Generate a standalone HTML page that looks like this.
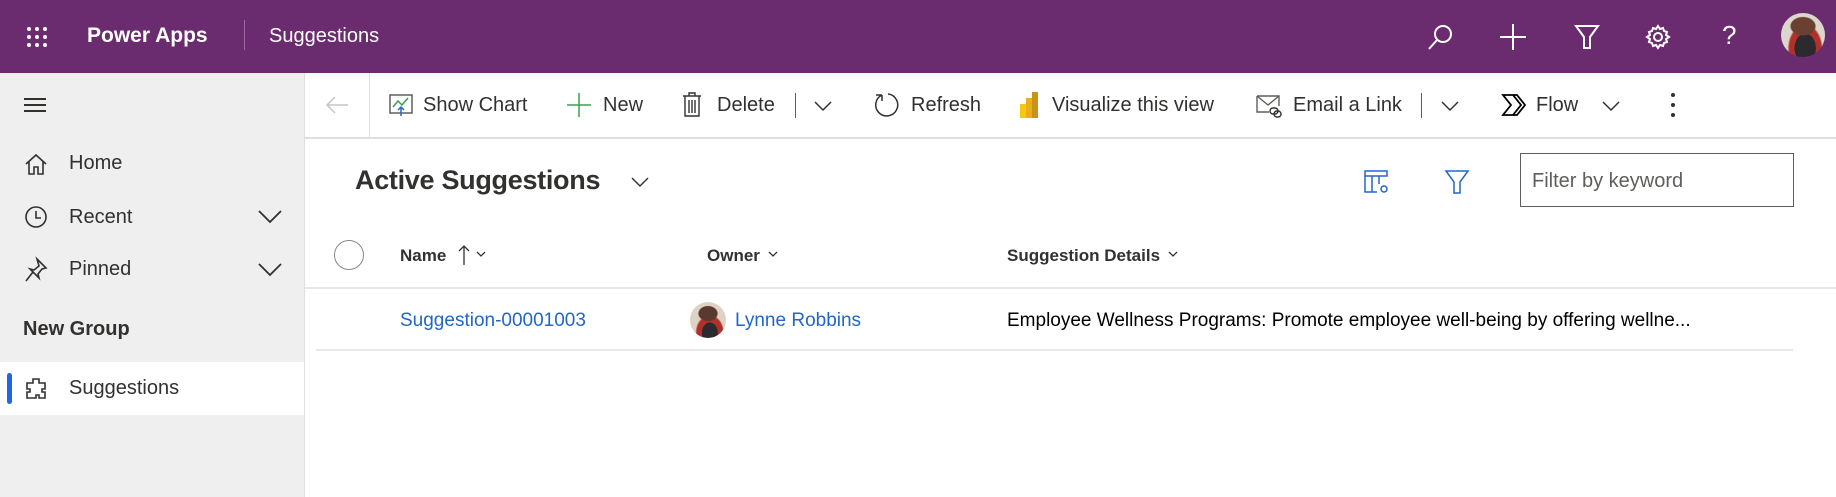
<!DOCTYPE html>
<html><head><meta charset="utf-8"><style>
*{margin:0;padding:0;box-sizing:border-box}
body{width:1836px;height:497px;overflow:hidden;background:#fff;font-family:"Liberation Sans",sans-serif;color:#323130;position:relative}
.a{position:absolute;white-space:nowrap}
.hdr{left:0;top:0;width:1836px;height:73px;background:#6b2c6f}
.side{left:0;top:73px;width:305px;height:424px;background:#efefef;border-right:1px solid #e1dfdd}
.tb{font-size:20px;top:93px;line-height:24px}
svg{position:absolute;overflow:visible}
</style></head><body>
<div class="a hdr"></div>
<svg style="left:27px;top:27px" width="20" height="20" fill="#fff"><circle cx="2" cy="2" r="2"/><circle cx="10" cy="2" r="2"/><circle cx="18" cy="2" r="2"/><circle cx="2" cy="10" r="2"/><circle cx="10" cy="10" r="2"/><circle cx="18" cy="10" r="2"/><circle cx="2" cy="18" r="2"/><circle cx="10" cy="18" r="2"/><circle cx="18" cy="18" r="2"/></svg>
<div class="a" style="left:87px;top:24px;font-size:21px;font-weight:bold;color:#fff">Power Apps</div>
<div class="a" style="left:244px;top:20px;width:1px;height:30px;background:#9d6aa0"></div>
<div class="a" style="left:269px;top:25px;font-size:20px;color:#fff">Suggestions</div>
<svg style="left:1428px;top:24px" width="26" height="26" fill="none" stroke="#fff" stroke-width="2"><circle cx="15" cy="10" r="8"/><path d="M9 16L1 25"/></svg>
<svg style="left:1500px;top:24px" width="26" height="26" stroke="#fff" stroke-width="2"><path d="M13 0v26M0 13h26"/></svg>
<svg style="left:1575px;top:24px" width="24" height="26" fill="none" stroke="#fff" stroke-width="2"><path d="M1 2h22l-8 11v11h-6V13z"/></svg>
<svg style="left:1646px;top:25px" width="24" height="24" fill="none" stroke="#fff" stroke-width="2"><circle cx="12" cy="12" r="4"/><path d="M12 1l2 3 3-1 1 3 3 1-1 3 3 2-3 2 1 3-3 1-1 3-3-1-2 3-2-3-3 1-1-3-3-1 1-3-3-2 3-2-1-3 3-1 1-3 3 1z"/></svg>
<div class="a" style="left:1722px;top:20px;font-size:26px;color:#fff">?</div>
<div class="a" style="left:1781px;top:13px;width:44px;height:44px;border-radius:50%;background:radial-gradient(ellipse 30% 22% at 50% 30%,#6a4033 0 90%,transparent 100%),radial-gradient(ellipse 40% 55% at 55% 80%,#2b2a2e 0 60%,#b0302c 61% 90%,transparent 100%),#ddd6cc"></div>

<div class="a side"></div>
<svg style="left:24px;top:97px" width="22" height="16" stroke="#323130" stroke-width="2"><path d="M0 2h22M0 8h22M0 14h22"/></svg>
<svg style="left:25px;top:153px" width="22" height="22" fill="none" stroke="#323130" stroke-width="1.6"><path d="M1 11L11 2l10 9M4 8v13h5v-7h4v7h5V8"/></svg>
<div class="a" style="left:69px;top:152px;font-size:20px">Home</div>
<svg style="left:25px;top:206px" width="22" height="22" fill="none" stroke="#323130" stroke-width="1.6"><circle cx="11" cy="11" r="10"/><path d="M11 5v7h5"/></svg>
<div class="a" style="left:69px;top:206px;font-size:20px">Recent</div>
<svg style="left:258px;top:210px" width="24" height="14" fill="none" stroke="#323130" stroke-width="1.8"><path d="M1 1l11 11L23 1"/></svg>
<svg style="left:25px;top:258px" width="22" height="24" fill="none" stroke="#323130" stroke-width="1.6"><path d="M12 1l9 9-4 1-4 5 1 4-9-9 4 1 5-4zM8 14l-7 9"/></svg>
<div class="a" style="left:69px;top:258px;font-size:20px">Pinned</div>
<svg style="left:258px;top:263px" width="24" height="14" fill="none" stroke="#323130" stroke-width="1.8"><path d="M1 1l11 11L23 1"/></svg>
<div class="a" style="left:23px;top:318px;font-size:20px;font-weight:bold">New Group</div>
<div class="a" style="left:0;top:362px;width:304px;height:53px;background:#fff"></div>
<div class="a" style="left:7px;top:373px;width:5px;height:31px;background:#2266e3;border-radius:3px"></div>
<svg style="left:24px;top:377px" width="24" height="24" fill="none" stroke="#323130" stroke-width="1.6"><path d="M9 2h6v4h6v6h-3v3h3v6h-6v-3h-3v3H3v-6h3v-3H3V6h6z"/></svg>
<div class="a" style="left:69px;top:377px;font-size:20px">Suggestions</div>

<div class="a" style="left:305px;top:137px;width:1531px;height:2px;background:#e1dfdd"></div>
<div class="a" style="left:369px;top:73px;width:1px;height:64px;background:#e1dfdd"></div>
<svg style="left:326px;top:96px" width="22" height="18" fill="none" stroke="#c8c6c4" stroke-width="1.5"><path d="M22 9H1M9 1L1 9l8 8"/></svg>
<svg style="left:389px;top:94px" width="24" height="22" fill="none" stroke-width="1.5"><rect x="1" y="1" width="22" height="18" stroke="#605e5c"/><path d="M4 13l5-6 4 4 6-7" stroke="#3aa050"/><path d="M12 22v-9M9 16l3-3 3 3" stroke="#2266c7"/></svg>
<div class="a tb" style="left:423px">Show Chart</div>
<svg style="left:567px;top:93px" width="24" height="24" stroke="#3aa050" stroke-width="1.5"><path d="M12 0v24M0 12h24"/></svg>
<div class="a tb" style="left:603px">New</div>
<svg style="left:683px;top:92px" width="18" height="25" fill="none" stroke="#323130" stroke-width="1.4"><path d="M0 4h18M6 4V1h6v3M2 4v20h14V4M6 8v13M9 8v13M12 8v13"/></svg>
<div class="a tb" style="left:717px">Delete</div>
<div class="a" style="left:795px;top:93px;width:1px;height:25px;background:#605e5c"></div>
<svg style="left:814px;top:101px" width="18" height="10" fill="none" stroke="#323130" stroke-width="1.5"><path d="M1 1l8 8 8-8"/></svg>
<svg style="left:874px;top:93px" width="24" height="24" fill="none" stroke="#323130" stroke-width="1.5"><path d="M8 2A11 11 0 1 0 14 1M8 2v6M8 2H2"/></svg>
<div class="a tb" style="left:911px">Refresh</div>
<svg style="left:1020px;top:92px" width="18" height="26"><rect x="0" y="12" width="6" height="14" fill="#f2c811"/><rect x="6" y="6" width="6" height="20" fill="#e8b015"/><rect x="12" y="0" width="6" height="26" fill="#c8931a"/></svg>
<div class="a tb" style="left:1052px">Visualize this view</div>
<svg style="left:1256px;top:94px" width="26" height="24" fill="none" stroke="#605e5c" stroke-width="1.4"><path d="M1 2h22v10M1 2v16h12M1 2l11 9 11-9"/><rect x="14" y="14" width="8" height="6" rx="3" stroke="#323130"/><rect x="18" y="17" width="7" height="6" rx="3" stroke="#323130"/></svg>
<div class="a tb" style="left:1293px">Email a Link</div>
<div class="a" style="left:1421px;top:93px;width:1px;height:25px;background:#605e5c"></div>
<svg style="left:1441px;top:101px" width="18" height="10" fill="none" stroke="#323130" stroke-width="1.5"><path d="M1 1l8 8 8-8"/></svg>
<svg style="left:1502px;top:94px" width="24" height="22" fill="none" stroke="#000" stroke-width="1.8"><path d="M1 1h10l8 10-8 10H1l8-10z"/><path d="M11 1h4l8 10-8 10h-4"/></svg>
<div class="a tb" style="left:1536px">Flow</div>
<svg style="left:1602px;top:101px" width="18" height="10" fill="none" stroke="#323130" stroke-width="1.5"><path d="M1 1l8 8 8-8"/></svg>
<svg style="left:1671px;top:93px" width="4" height="24" fill="#323130"><circle cx="2" cy="2" r="2"/><circle cx="2" cy="12" r="2"/><circle cx="2" cy="22" r="2"/></svg>

<div class="a" style="left:355px;top:165px;font-size:27px;font-weight:bold;color:#323130;letter-spacing:-0.3px">Active Suggestions</div>
<svg style="left:631px;top:177px" width="18" height="10" fill="none" stroke="#323130" stroke-width="1.4"><path d="M1 1l8 8 8-8"/></svg>
<svg style="left:1364px;top:170px" width="26" height="24" fill="none" stroke="#2266c7" stroke-width="1.5"><path d="M1 1h22v5H1zM1 6v16h12M8 6v16M15 6v8"/><circle cx="20" cy="19" r="3"/></svg>
<svg style="left:1445px;top:170px" width="24" height="24" fill="none" stroke="#2266c7" stroke-width="1.5"><path d="M1 1h22l-8 11v11h-6V12z"/></svg>
<div class="a" style="left:1520px;top:153px;width:274px;height:54px;border:1.5px solid #605e5c"></div>
<div class="a" style="left:1532px;top:170px;font-size:20px;color:#605e5c">Filter by keyword</div>

<div class="a" style="left:334px;top:240px;width:30px;height:30px;border-radius:50%;border:1.5px solid #8a8886"></div>
<div class="a" style="left:400px;top:246px;font-size:17px;font-weight:bold">Name</div>
<svg style="left:458px;top:245px" width="12" height="20" fill="none" stroke="#323130" stroke-width="1.3"><path d="M6 20V1M1 6l5-5 5 5"/></svg>
<svg style="left:476px;top:251px" width="10" height="6" fill="none" stroke="#323130" stroke-width="1.3"><path d="M1 1l4 4 4-4"/></svg>
<div class="a" style="left:707px;top:246px;font-size:17px;font-weight:bold">Owner</div>
<svg style="left:768px;top:251px" width="10" height="6" fill="none" stroke="#323130" stroke-width="1.3"><path d="M1 1l4 4 4-4"/></svg>
<div class="a" style="left:1007px;top:246px;font-size:17px;font-weight:bold">Suggestion Details</div>
<svg style="left:1168px;top:251px" width="10" height="6" fill="none" stroke="#323130" stroke-width="1.3"><path d="M1 1l4 4 4-4"/></svg>
<div class="a" style="left:305px;top:287px;width:1531px;height:2px;background:#e8e8e8"></div>

<div class="a" style="left:400px;top:310px;font-size:19px;color:#2266c7">Suggestion-00001003</div>
<div class="a" style="left:690px;top:302px;width:36px;height:36px;border-radius:50%;background:radial-gradient(ellipse 28% 22% at 50% 32%,#5a3a30 0 90%,transparent 100%),radial-gradient(ellipse 40% 50% at 55% 85%,#2b2a2e 0 55%,#b0302c 56% 90%,transparent 100%),#ddd2c4"></div>
<div class="a" style="left:735px;top:310px;font-size:19px;color:#2266c7">Lynne Robbins</div>
<div class="a" style="left:1007px;top:310px;font-size:19px;color:#000">Employee Wellness Programs: Promote employee well-being by offering wellne...</div>
<div class="a" style="left:316px;top:349px;width:1477px;height:2px;background:#e8e8e8"></div>
</body></html>
